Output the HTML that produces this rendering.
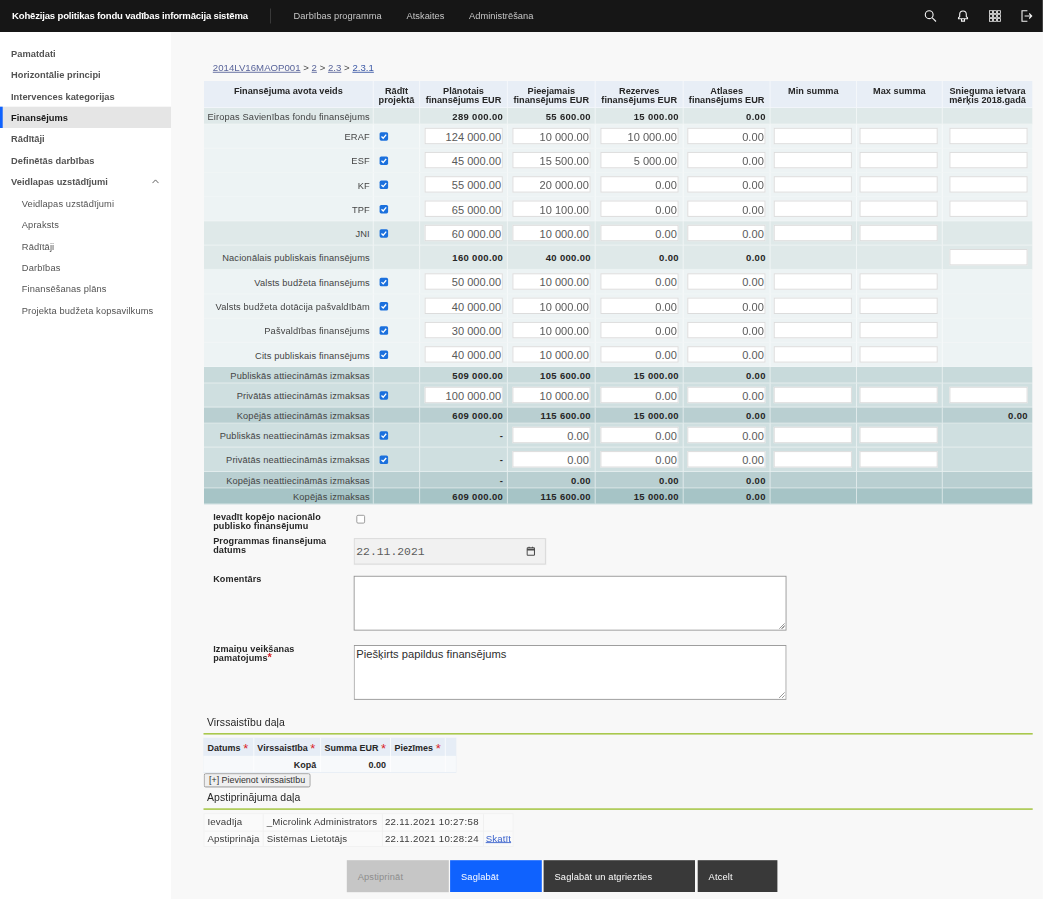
<!DOCTYPE html>
<html lang="lv">
<head>
<meta charset="utf-8">
<title>Kohēzijas politikas fondu vadības informācija sistēma</title>
<style>
*{box-sizing:border-box;margin:0;padding:0}
html{font-size:10px}
html,body{width:1044px;height:899px;overflow:hidden;background:#fff}
#root{position:absolute;left:0;top:0;width:1044rem;height:899rem;transform:scale(.1);transform-origin:0 0}
body{font-family:"Liberation Sans",sans-serif;color:#161616;position:relative;font-size:9.33rem}
.abs{position:absolute}
#main{position:absolute;left:171rem;top:32rem;width:871.8rem;height:867rem;background:#f8f8f8}
#hdr{position:absolute;left:0;top:0;width:1042.8rem;height:32rem;background:#161616;color:#fff}
#hdr .ttl{position:absolute;left:12rem;top:0;line-height:32rem;font-weight:bold;font-size:9.6rem;letter-spacing:-.2rem;white-space:nowrap;color:#fff}
#hdr .div{position:absolute;left:270rem;top:8.5rem;width:1rem;height:15rem;background:#393939}
#hdr .mi{position:absolute;top:0;line-height:31.5rem;font-size:9.33rem;color:#c6c6c6;white-space:nowrap}
#hdr svg{position:absolute;top:9.5rem}
#side{position:absolute;left:0;top:32rem;width:171rem;height:867rem;background:#fff}
#side .it{position:absolute;left:0;width:171rem;height:21.33rem;line-height:22.2rem;padding-left:11rem;font-weight:bold;font-size:9.33rem;color:#525252;white-space:nowrap}
#side .it.sub{padding-left:21.8rem;font-weight:normal;color:#525252;line-height:23.5rem;letter-spacing:.1rem}
#side .it.act{background:#e5e5e5;color:#161616;border-left:2.7rem solid #0f62fe;padding-left:8.3rem}
.bc{position:absolute;left:212.8rem;top:62rem;font-size:9.65rem;line-height:12rem;white-space:nowrap;color:#4a4a4a}
.bc a{color:#59649a;text-decoration:underline}
.bc a.last{color:#3a58a6}
/* table */
.tbl{position:absolute;height:424rem}
.r{position:absolute;left:0;width:100%}
.r.hd{background:#e8eef6}
.c{position:absolute;top:0;height:100%;border-right:1rem solid rgba(255,255,255,.55);border-bottom:1rem solid rgba(255,255,255,.4);white-space:nowrap}
.r.lt .c{border-bottom-color:rgba(255,255,255,.12)}
.r .c:last-child{border-right:0}
.c.h{text-align:center;font-weight:bold;font-size:9.2rem;line-height:9.2rem;color:#262626;padding-top:5.3rem}
.c.lab{text-align:right;padding-right:3rem;padding-top:1.9rem;font-size:9.33rem;letter-spacing:.1rem;color:#444;display:flex;align-items:center;justify-content:flex-end}
.c.chk{display:flex;align-items:center}
.c.v{display:flex;align-items:center;justify-content:flex-end;padding-right:4.1rem}
.c.v:last-child{padding-right:4.7rem}
.bv{font-weight:bold;font-size:9.5rem;letter-spacing:.33rem;margin-right:-.33rem;color:#262626;position:relative;top:.6rem}
.inp{display:block;width:78.2rem;height:16.4rem;background:#fff;border:1rem solid #dcdcdc;font-weight:normal;font-size:11.1rem;line-height:16.4rem;text-align:right;padding-right:.7rem;color:#5a5a5a}
.cb{display:block;width:8.5rem;height:8.5rem;background:#1b70dd;border-radius:1.6rem;margin-left:5.8rem;position:relative;top:.5rem}
.cb svg{display:block;width:100%;height:100%}
.lbl{position:absolute;left:213.2rem;font-weight:bold;font-size:9.1rem;letter-spacing:.08rem;line-height:9rem;color:#262626;white-space:nowrap}
.ta{position:absolute;left:353.7rem;width:432.8rem;height:54.8rem;background:#fff;border:.9rem solid #949494;font-size:11.2rem;line-height:12rem;padding:2rem 1.7rem;color:#2e2e2e}
.ta:after{content:"";position:absolute;right:1rem;bottom:1rem;width:6rem;height:6rem;background:linear-gradient(135deg,transparent 0 48%,#999 48% 58%,transparent 58% 72%,#999 72% 82%,transparent 82%)}
.sec{position:absolute;left:207rem;font-size:10.5rem;letter-spacing:.06rem;color:#262626;white-space:nowrap;line-height:12rem}
.gl{position:absolute;left:203.5rem;width:829.2rem;height:1.6rem;background:#a9c84c}
.st{position:absolute;font-size:9.7rem;letter-spacing:.1rem;color:#3a3a3a;white-space:nowrap}
.st.n{letter-spacing:.3rem}
.st.b{font-weight:bold;font-size:9rem;letter-spacing:0;color:#262626}
.rq{color:#da1e28;font-size:13rem;line-height:0;font-weight:normal;margin-left:2.6rem;position:relative;top:2.4rem}
.vl{top:0;width:1rem;height:100%;background:rgba(255,255,255,.7)}
.btn{position:absolute;top:860.2rem;height:31.8rem;line-height:33rem;padding-left:10.9rem;font-size:9.33rem;letter-spacing:.12rem;color:#fff;white-space:nowrap}
</style>
</head>
<body>
<div id="root">
<div id="main"></div>
<div id="hdr">
  <div class="ttl">Kohēzijas politikas fondu vadības informācija sistēma</div>
  <div class="div"></div>
  <div class="mi" style="left:293.6rem">Darbības programma</div>
  <div class="mi" style="left:406.5rem">Atskaites</div>
  <div class="mi" style="left:469.1rem">Administrēšana</div>
  <!-- search -->
  <svg style="width:13rem;height:13rem;left:924rem" viewBox="0 0 13 13" fill="none" stroke="#f4f4f4" stroke-width="1.1"><circle cx="5.2" cy="5.2" r="3.9"/><path d="M8.1 8.1 L12 12"/></svg>
  <!-- bell -->
  <svg style="width:13rem;height:13rem;left:956.5rem" viewBox="0 0 13 13" fill="none" stroke="#f4f4f4" stroke-width="1.1"><path d="M2 9.3 V8.3 L3.2 7 V4.8 A3.3 3.3 0 0 1 9.8 4.8 V7 L11 8.3 V9.3 Z"/><path d="M5 9.5 V11.6 H8 V9.5"/></svg>
  <!-- grid -->
  <svg style="width:13rem;height:13rem;left:988.5rem" viewBox="0 0 13 13" fill="none" stroke="#f4f4f4" stroke-width="1"><g stroke-width=".8"><rect x="1" y="1.2" width="3.1" height="2.7"/><rect x="4.95" y="1.2" width="3.1" height="2.7"/><rect x="8.9" y="1.2" width="3.1" height="2.7"/><rect x="1" y="5.15" width="3.1" height="2.7"/><rect x="4.95" y="5.15" width="3.1" height="2.7"/><rect x="8.9" y="5.15" width="3.1" height="2.7"/><rect x="1" y="9.1" width="3.1" height="2.7"/><rect x="4.95" y="9.1" width="3.1" height="2.7"/><rect x="8.9" y="9.1" width="3.1" height="2.7"/></g></svg>
  <!-- logout -->
  <svg style="width:13rem;height:13rem;left:1020rem" viewBox="0 0 13 13" fill="none" stroke="#f4f4f4" stroke-width="1.1"><path d="M7.4 1.2 H2 V11.8 H7.4"/><path d="M4.6 6.5 H11.5 M9.2 4 L11.7 6.5 L9.2 9"/></svg>
</div>
<div id="side">
  <div class="it" style="top:10.67rem">Pamatdati</div>
  <div class="it" style="top:32rem">Horizontālie principi</div>
  <div class="it" style="top:53.33rem">Intervences kategorijas</div>
  <div class="it act" style="top:74.67rem">Finansējums</div>
  <div class="it" style="top:96rem">Rādītāji</div>
  <div class="it" style="top:117.33rem">Definētās darbības</div>
  <div class="it" style="top:138.67rem">Veidlapas uzstādījumi
    <svg style="width:7rem;height:5rem;position:absolute;left:152rem;top:8.2rem" viewBox="0 0 7 5" fill="none" stroke="#525252" stroke-width="0.9"><path d="M0.5 4.2 L3.5 1 L6.5 4.2"/></svg>
  </div>
  <div class="it sub" style="top:160rem">Veidlapas uzstādījumi</div>
  <div class="it sub" style="top:181.33rem">Apraksts</div>
  <div class="it sub" style="top:202.67rem">Rādītāji</div>
  <div class="it sub" style="top:224rem">Darbības</div>
  <div class="it sub" style="top:245.33rem">Finansēšanas plāns</div>
  <div class="it sub" style="top:266.67rem">Projekta budžeta kopsavilkums</div>
</div>

<div class="bc"><a>2014LV16MAOP001</a> &gt; <a>2</a> &gt; <a>2.3</a> &gt; <a class="last">2.3.1</a></div>

<div class="tbl" style="left:204.0rem;top:81.0rem;width:828.3rem">
<div class="r hd" style="top:0;height:27.0rem">
<div class="c h" style="left:0.0rem;width:169.8rem;"><span>Finansējuma avota veids</span></div>
<div class="c h" style="left:169.8rem;width:46.3rem;"><span>Rādīt<br>projektā</span></div>
<div class="c h" style="left:216.1rem;width:87.8rem;"><span>Plānotais<br>finansējums EUR</span></div>
<div class="c h" style="left:303.9rem;width:87.8rem;"><span>Pieejamais<br>finansējums EUR</span></div>
<div class="c h" style="left:391.7rem;width:88.0rem;"><span>Rezerves<br>finansējums EUR</span></div>
<div class="c h" style="left:479.7rem;width:86.9rem;"><span>Atlases<br>finansējums EUR</span></div>
<div class="c h" style="left:566.6rem;width:86.4rem;"><span>Min summa</span></div>
<div class="c h" style="left:653.0rem;width:85.8rem;"><span>Max summa</span></div>
<div class="c h" style="left:738.8rem;width:89.5rem;"><span>Snieguma ietvara<br>mērķis 2018.gadā</span></div>
</div>
<div class="r sum" style="top:27.00rem;height:16.5rem;background:#dfe9e9">
<div class="c lab" style="left:0.0rem;width:169.8rem;"><span>Eiropas Savienības fondu finansējums</span></div>
<div class="c chk" style="left:169.8rem;width:46.3rem;"></div>
<div class="c v" style="left:216.1rem;width:87.8rem;"><span class="bv">289 000.00</span></div>
<div class="c v" style="left:303.9rem;width:87.8rem;"><span class="bv">55 600.00</span></div>
<div class="c v" style="left:391.7rem;width:88.0rem;"><span class="bv">15 000.00</span></div>
<div class="c v" style="left:479.7rem;width:86.9rem;"><span class="bv">0.00</span></div>
<div class="c v" style="left:566.6rem;width:86.4rem;"></div>
<div class="c v" style="left:653.0rem;width:85.8rem;"></div>
<div class="c v" style="left:738.8rem;width:89.5rem;"></div>
</div>
<div class="r in lt" style="top:43.50rem;height:23.98rem;background:#edf3f4">
<div class="c lab" style="left:0.0rem;width:169.8rem;"><span>ERAF</span></div>
<div class="c chk" style="left:169.8rem;width:46.3rem;"><i class="cb"><svg viewBox="0 0 9 9"><path d="M2 4.6 L3.8 6.4 L7 2.6" fill="none" stroke="#fff" stroke-width="1.4"/></svg></i></div>
<div class="c v" style="left:216.1rem;width:87.8rem;"><b class="inp">124 000.00</b></div>
<div class="c v" style="left:303.9rem;width:87.8rem;"><b class="inp">10 000.00</b></div>
<div class="c v" style="left:391.7rem;width:88.0rem;"><b class="inp">10 000.00</b></div>
<div class="c v" style="left:479.7rem;width:86.9rem;"><b class="inp">0.00</b></div>
<div class="c v" style="left:566.6rem;width:86.4rem;"><b class="inp"></b></div>
<div class="c v" style="left:653.0rem;width:85.8rem;"><b class="inp"></b></div>
<div class="c v" style="left:738.8rem;width:89.5rem;"><b class="inp"></b></div>
</div>
<div class="r in lt" style="top:67.48rem;height:24.28rem;background:#edf3f4">
<div class="c lab" style="left:0.0rem;width:169.8rem;"><span>ESF</span></div>
<div class="c chk" style="left:169.8rem;width:46.3rem;"><i class="cb"><svg viewBox="0 0 9 9"><path d="M2 4.6 L3.8 6.4 L7 2.6" fill="none" stroke="#fff" stroke-width="1.4"/></svg></i></div>
<div class="c v" style="left:216.1rem;width:87.8rem;"><b class="inp">45 000.00</b></div>
<div class="c v" style="left:303.9rem;width:87.8rem;"><b class="inp">15 500.00</b></div>
<div class="c v" style="left:391.7rem;width:88.0rem;"><b class="inp">5 000.00</b></div>
<div class="c v" style="left:479.7rem;width:86.9rem;"><b class="inp">0.00</b></div>
<div class="c v" style="left:566.6rem;width:86.4rem;"><b class="inp"></b></div>
<div class="c v" style="left:653.0rem;width:85.8rem;"><b class="inp"></b></div>
<div class="c v" style="left:738.8rem;width:89.5rem;"><b class="inp"></b></div>
</div>
<div class="r in lt" style="top:91.76rem;height:24.28rem;background:#edf3f4">
<div class="c lab" style="left:0.0rem;width:169.8rem;"><span>KF</span></div>
<div class="c chk" style="left:169.8rem;width:46.3rem;"><i class="cb"><svg viewBox="0 0 9 9"><path d="M2 4.6 L3.8 6.4 L7 2.6" fill="none" stroke="#fff" stroke-width="1.4"/></svg></i></div>
<div class="c v" style="left:216.1rem;width:87.8rem;"><b class="inp">55 000.00</b></div>
<div class="c v" style="left:303.9rem;width:87.8rem;"><b class="inp">20 000.00</b></div>
<div class="c v" style="left:391.7rem;width:88.0rem;"><b class="inp">0.00</b></div>
<div class="c v" style="left:479.7rem;width:86.9rem;"><b class="inp">0.00</b></div>
<div class="c v" style="left:566.6rem;width:86.4rem;"><b class="inp"></b></div>
<div class="c v" style="left:653.0rem;width:85.8rem;"><b class="inp"></b></div>
<div class="c v" style="left:738.8rem;width:89.5rem;"><b class="inp"></b></div>
</div>
<div class="r in lt" style="top:116.04rem;height:24.28rem;background:#edf3f4">
<div class="c lab" style="left:0.0rem;width:169.8rem;"><span>TPF</span></div>
<div class="c chk" style="left:169.8rem;width:46.3rem;"><i class="cb"><svg viewBox="0 0 9 9"><path d="M2 4.6 L3.8 6.4 L7 2.6" fill="none" stroke="#fff" stroke-width="1.4"/></svg></i></div>
<div class="c v" style="left:216.1rem;width:87.8rem;"><b class="inp">65 000.00</b></div>
<div class="c v" style="left:303.9rem;width:87.8rem;"><b class="inp">10 100.00</b></div>
<div class="c v" style="left:391.7rem;width:88.0rem;"><b class="inp">0.00</b></div>
<div class="c v" style="left:479.7rem;width:86.9rem;"><b class="inp">0.00</b></div>
<div class="c v" style="left:566.6rem;width:86.4rem;"><b class="inp"></b></div>
<div class="c v" style="left:653.0rem;width:85.8rem;"><b class="inp"></b></div>
<div class="c v" style="left:738.8rem;width:89.5rem;"><b class="inp"></b></div>
</div>
<div class="r in" style="top:140.32rem;height:24.28rem;background:#dfe9e9">
<div class="c lab" style="left:0.0rem;width:169.8rem;"><span>JNI</span></div>
<div class="c chk" style="left:169.8rem;width:46.3rem;"><i class="cb"><svg viewBox="0 0 9 9"><path d="M2 4.6 L3.8 6.4 L7 2.6" fill="none" stroke="#fff" stroke-width="1.4"/></svg></i></div>
<div class="c v" style="left:216.1rem;width:87.8rem;"><b class="inp">60 000.00</b></div>
<div class="c v" style="left:303.9rem;width:87.8rem;"><b class="inp">10 000.00</b></div>
<div class="c v" style="left:391.7rem;width:88.0rem;"><b class="inp">0.00</b></div>
<div class="c v" style="left:479.7rem;width:86.9rem;"><b class="inp">0.00</b></div>
<div class="c v" style="left:566.6rem;width:86.4rem;"><b class="inp"></b></div>
<div class="c v" style="left:653.0rem;width:85.8rem;"><b class="inp"></b></div>
<div class="c v" style="left:738.8rem;width:89.5rem;"></div>
</div>
<div class="r sum" style="top:164.60rem;height:24.28rem;background:#dfe9e9">
<div class="c lab" style="left:0.0rem;width:169.8rem;"><span>Nacionālais publiskais finansējums</span></div>
<div class="c chk" style="left:169.8rem;width:46.3rem;"></div>
<div class="c v" style="left:216.1rem;width:87.8rem;"><span class="bv">160 000.00</span></div>
<div class="c v" style="left:303.9rem;width:87.8rem;"><span class="bv">40 000.00</span></div>
<div class="c v" style="left:391.7rem;width:88.0rem;"><span class="bv">0.00</span></div>
<div class="c v" style="left:479.7rem;width:86.9rem;"><span class="bv">0.00</span></div>
<div class="c v" style="left:566.6rem;width:86.4rem;"></div>
<div class="c v" style="left:653.0rem;width:85.8rem;"></div>
<div class="c v" style="left:738.8rem;width:89.5rem;"><b class="inp"></b></div>
</div>
<div class="r in lt" style="top:188.88rem;height:24.28rem;background:#edf3f4">
<div class="c lab" style="left:0.0rem;width:169.8rem;"><span>Valsts budžeta finansējums</span></div>
<div class="c chk" style="left:169.8rem;width:46.3rem;"><i class="cb"><svg viewBox="0 0 9 9"><path d="M2 4.6 L3.8 6.4 L7 2.6" fill="none" stroke="#fff" stroke-width="1.4"/></svg></i></div>
<div class="c v" style="left:216.1rem;width:87.8rem;"><b class="inp">50 000.00</b></div>
<div class="c v" style="left:303.9rem;width:87.8rem;"><b class="inp">10 000.00</b></div>
<div class="c v" style="left:391.7rem;width:88.0rem;"><b class="inp">0.00</b></div>
<div class="c v" style="left:479.7rem;width:86.9rem;"><b class="inp">0.00</b></div>
<div class="c v" style="left:566.6rem;width:86.4rem;"><b class="inp"></b></div>
<div class="c v" style="left:653.0rem;width:85.8rem;"><b class="inp"></b></div>
<div class="c v" style="left:738.8rem;width:89.5rem;"></div>
</div>
<div class="r in lt" style="top:213.16rem;height:24.28rem;background:#edf3f4">
<div class="c lab" style="left:0.0rem;width:169.8rem;"><span>Valsts budžeta dotācija pašvaldībām</span></div>
<div class="c chk" style="left:169.8rem;width:46.3rem;"><i class="cb"><svg viewBox="0 0 9 9"><path d="M2 4.6 L3.8 6.4 L7 2.6" fill="none" stroke="#fff" stroke-width="1.4"/></svg></i></div>
<div class="c v" style="left:216.1rem;width:87.8rem;"><b class="inp">40 000.00</b></div>
<div class="c v" style="left:303.9rem;width:87.8rem;"><b class="inp">10 000.00</b></div>
<div class="c v" style="left:391.7rem;width:88.0rem;"><b class="inp">0.00</b></div>
<div class="c v" style="left:479.7rem;width:86.9rem;"><b class="inp">0.00</b></div>
<div class="c v" style="left:566.6rem;width:86.4rem;"><b class="inp"></b></div>
<div class="c v" style="left:653.0rem;width:85.8rem;"><b class="inp"></b></div>
<div class="c v" style="left:738.8rem;width:89.5rem;"></div>
</div>
<div class="r in lt" style="top:237.44rem;height:24.28rem;background:#edf3f4">
<div class="c lab" style="left:0.0rem;width:169.8rem;"><span>Pašvaldības finansējums</span></div>
<div class="c chk" style="left:169.8rem;width:46.3rem;"><i class="cb"><svg viewBox="0 0 9 9"><path d="M2 4.6 L3.8 6.4 L7 2.6" fill="none" stroke="#fff" stroke-width="1.4"/></svg></i></div>
<div class="c v" style="left:216.1rem;width:87.8rem;"><b class="inp">30 000.00</b></div>
<div class="c v" style="left:303.9rem;width:87.8rem;"><b class="inp">10 000.00</b></div>
<div class="c v" style="left:391.7rem;width:88.0rem;"><b class="inp">0.00</b></div>
<div class="c v" style="left:479.7rem;width:86.9rem;"><b class="inp">0.00</b></div>
<div class="c v" style="left:566.6rem;width:86.4rem;"><b class="inp"></b></div>
<div class="c v" style="left:653.0rem;width:85.8rem;"><b class="inp"></b></div>
<div class="c v" style="left:738.8rem;width:89.5rem;"></div>
</div>
<div class="r in lt" style="top:261.72rem;height:24.28rem;background:#edf3f4">
<div class="c lab" style="left:0.0rem;width:169.8rem;"><span>Cits publiskais finansējums</span></div>
<div class="c chk" style="left:169.8rem;width:46.3rem;"><i class="cb"><svg viewBox="0 0 9 9"><path d="M2 4.6 L3.8 6.4 L7 2.6" fill="none" stroke="#fff" stroke-width="1.4"/></svg></i></div>
<div class="c v" style="left:216.1rem;width:87.8rem;"><b class="inp">40 000.00</b></div>
<div class="c v" style="left:303.9rem;width:87.8rem;"><b class="inp">10 000.00</b></div>
<div class="c v" style="left:391.7rem;width:88.0rem;"><b class="inp">0.00</b></div>
<div class="c v" style="left:479.7rem;width:86.9rem;"><b class="inp">0.00</b></div>
<div class="c v" style="left:566.6rem;width:86.4rem;"><b class="inp"></b></div>
<div class="c v" style="left:653.0rem;width:85.8rem;"><b class="inp"></b></div>
<div class="c v" style="left:738.8rem;width:89.5rem;"></div>
</div>
<div class="r sum" style="top:286.00rem;height:16.4rem;background:#c8dadb">
<div class="c lab" style="left:0.0rem;width:169.8rem;"><span>Publiskās attiecināmās izmaksas</span></div>
<div class="c chk" style="left:169.8rem;width:46.3rem;"></div>
<div class="c v" style="left:216.1rem;width:87.8rem;"><span class="bv">509 000.00</span></div>
<div class="c v" style="left:303.9rem;width:87.8rem;"><span class="bv">105 600.00</span></div>
<div class="c v" style="left:391.7rem;width:88.0rem;"><span class="bv">15 000.00</span></div>
<div class="c v" style="left:479.7rem;width:86.9rem;"><span class="bv">0.00</span></div>
<div class="c v" style="left:566.6rem;width:86.4rem;"></div>
<div class="c v" style="left:653.0rem;width:85.8rem;"></div>
<div class="c v" style="left:738.8rem;width:89.5rem;"></div>
</div>
<div class="r in" style="top:302.40rem;height:24.1rem;background:#cfdfe0">
<div class="c lab" style="left:0.0rem;width:169.8rem;"><span>Privātās attiecināmās izmaksas</span></div>
<div class="c chk" style="left:169.8rem;width:46.3rem;"><i class="cb"><svg viewBox="0 0 9 9"><path d="M2 4.6 L3.8 6.4 L7 2.6" fill="none" stroke="#fff" stroke-width="1.4"/></svg></i></div>
<div class="c v" style="left:216.1rem;width:87.8rem;"><b class="inp">100 000.00</b></div>
<div class="c v" style="left:303.9rem;width:87.8rem;"><b class="inp">10 000.00</b></div>
<div class="c v" style="left:391.7rem;width:88.0rem;"><b class="inp">0.00</b></div>
<div class="c v" style="left:479.7rem;width:86.9rem;"><b class="inp">0.00</b></div>
<div class="c v" style="left:566.6rem;width:86.4rem;"><b class="inp"></b></div>
<div class="c v" style="left:653.0rem;width:85.8rem;"><b class="inp"></b></div>
<div class="c v" style="left:738.8rem;width:89.5rem;"><b class="inp"></b></div>
</div>
<div class="r sum" style="top:326.50rem;height:16.0rem;background:#b9cfd1">
<div class="c lab" style="left:0.0rem;width:169.8rem;"><span>Kopējās attiecināmās izmaksas</span></div>
<div class="c chk" style="left:169.8rem;width:46.3rem;"></div>
<div class="c v" style="left:216.1rem;width:87.8rem;"><span class="bv">609 000.00</span></div>
<div class="c v" style="left:303.9rem;width:87.8rem;"><span class="bv">115 600.00</span></div>
<div class="c v" style="left:391.7rem;width:88.0rem;"><span class="bv">15 000.00</span></div>
<div class="c v" style="left:479.7rem;width:86.9rem;"><span class="bv">0.00</span></div>
<div class="c v" style="left:566.6rem;width:86.4rem;"></div>
<div class="c v" style="left:653.0rem;width:85.8rem;"></div>
<div class="c v" style="left:738.8rem;width:89.5rem;"><span class="bv">0.00</span></div>
</div>
<div class="r in" style="top:342.50rem;height:24.0rem;background:#cfdfe0">
<div class="c lab" style="left:0.0rem;width:169.8rem;"><span>Publiskās neattiecināmās izmaksas</span></div>
<div class="c chk" style="left:169.8rem;width:46.3rem;"><i class="cb"><svg viewBox="0 0 9 9"><path d="M2 4.6 L3.8 6.4 L7 2.6" fill="none" stroke="#fff" stroke-width="1.4"/></svg></i></div>
<div class="c v" style="left:216.1rem;width:87.8rem;"><span class="bv">-</span></div>
<div class="c v" style="left:303.9rem;width:87.8rem;"><b class="inp">0.00</b></div>
<div class="c v" style="left:391.7rem;width:88.0rem;"><b class="inp">0.00</b></div>
<div class="c v" style="left:479.7rem;width:86.9rem;"><b class="inp">0.00</b></div>
<div class="c v" style="left:566.6rem;width:86.4rem;"><b class="inp"></b></div>
<div class="c v" style="left:653.0rem;width:85.8rem;"><b class="inp"></b></div>
<div class="c v" style="left:738.8rem;width:89.5rem;"></div>
</div>
<div class="r in" style="top:366.50rem;height:24.5rem;background:#cfdfe0">
<div class="c lab" style="left:0.0rem;width:169.8rem;"><span>Privātās neattiecināmās izmaksas</span></div>
<div class="c chk" style="left:169.8rem;width:46.3rem;"><i class="cb"><svg viewBox="0 0 9 9"><path d="M2 4.6 L3.8 6.4 L7 2.6" fill="none" stroke="#fff" stroke-width="1.4"/></svg></i></div>
<div class="c v" style="left:216.1rem;width:87.8rem;"><span class="bv">-</span></div>
<div class="c v" style="left:303.9rem;width:87.8rem;"><b class="inp">0.00</b></div>
<div class="c v" style="left:391.7rem;width:88.0rem;"><b class="inp">0.00</b></div>
<div class="c v" style="left:479.7rem;width:86.9rem;"><b class="inp">0.00</b></div>
<div class="c v" style="left:566.6rem;width:86.4rem;"><b class="inp"></b></div>
<div class="c v" style="left:653.0rem;width:85.8rem;"><b class="inp"></b></div>
<div class="c v" style="left:738.8rem;width:89.5rem;"></div>
</div>
<div class="r sum" style="top:391.00rem;height:16.3rem;background:#b9cfd1">
<div class="c lab" style="left:0.0rem;width:169.8rem;"><span>Kopējās neattiecināmās izmaksas</span></div>
<div class="c chk" style="left:169.8rem;width:46.3rem;"></div>
<div class="c v" style="left:216.1rem;width:87.8rem;"><span class="bv">-</span></div>
<div class="c v" style="left:303.9rem;width:87.8rem;"><span class="bv">0.00</span></div>
<div class="c v" style="left:391.7rem;width:88.0rem;"><span class="bv">0.00</span></div>
<div class="c v" style="left:479.7rem;width:86.9rem;"><span class="bv">0.00</span></div>
<div class="c v" style="left:566.6rem;width:86.4rem;"></div>
<div class="c v" style="left:653.0rem;width:85.8rem;"></div>
<div class="c v" style="left:738.8rem;width:89.5rem;"></div>
</div>
<div class="r sum" style="top:407.30rem;height:16.0rem;background:#a6c4c6">
<div class="c lab" style="left:0.0rem;width:169.8rem;"><span>Kopējās izmaksas</span></div>
<div class="c chk" style="left:169.8rem;width:46.3rem;"></div>
<div class="c v" style="left:216.1rem;width:87.8rem;"><span class="bv">609 000.00</span></div>
<div class="c v" style="left:303.9rem;width:87.8rem;"><span class="bv">115 600.00</span></div>
<div class="c v" style="left:391.7rem;width:88.0rem;"><span class="bv">15 000.00</span></div>
<div class="c v" style="left:479.7rem;width:86.9rem;"><span class="bv">0.00</span></div>
<div class="c v" style="left:566.6rem;width:86.4rem;"></div>
<div class="c v" style="left:653.0rem;width:85.8rem;"></div>
<div class="c v" style="left:738.8rem;width:89.5rem;"></div>
</div>
</div>

<div class="lbl" style="top:512.2rem">Ievadīt kopējo nacionālo<br>publisko finansējumu</div>
<div class="abs" style="left:356.4rem;top:514.9rem;width:8.6rem;height:8.6rem;border:.8rem solid #858585;border-radius:1.6rem;background:#fff"></div>
<div class="lbl" style="top:536.5rem">Programmas finansējuma<br>datums</div>
<div class="abs" style="left:353.7rem;top:538.1rem;width:192.2rem;height:26.5rem;background:#f1f1f1;border:1rem solid #dadada;font-family:'Liberation Mono',monospace;font-size:11.4rem;line-height:25rem;padding-left:1.5rem;color:#5c5c5c;white-space:nowrap">22.11.2021
  <svg style="width:9rem;height:10rem;position:absolute;left:171.6rem;top:7rem" viewBox="0 0 9 10" fill="none" stroke="#4a4a4a" stroke-width="1.1"><rect x="0.8" y="1.8" width="7.4" height="7.4" rx="0.8"/><path d="M0.8 3.6 H8.2" stroke-width="1.6"/><path d="M2.8 0.6 V2 M6.2 0.6 V2"/></svg>
</div>
<div class="lbl" style="top:574.2rem">Komentārs</div>
<div class="ta" style="top:575.8rem"></div>
<div class="lbl" style="top:643.9rem">Izmaiņu veikšanas<br>pamatojums<span style="color:#da1e28;font-size:11rem;line-height:0">*</span></div>
<div class="ta" style="top:645rem">Piešķirts papildus finansējums</div>

<div class="sec" style="top:716.3rem">Virssaistību daļa</div>
<div class="gl" style="top:733rem"></div>
<div class="abs" style="left:203.3rem;top:737.8rem;width:252.6rem;height:34.2rem">
  <div class="abs" style="left:0;top:0;width:100%;height:18.1rem;background:#e6edf6"></div>
  <div class="abs" style="left:0;top:18.1rem;width:100%;height:16.1rem;background:#f7f9fb"></div>
  <div class="abs vl" style="left:50rem"></div><div class="abs vl" style="left:116.8rem"></div><div class="abs vl" style="left:186.7rem"></div><div class="abs vl" style="left:241.5rem"></div>
  <div class="st b" style="left:4.3rem;top:4.9rem">Datums<span class="rq">*</span></div>
  <div class="st b" style="left:54rem;top:4.9rem">Virssaistība<span class="rq">*</span></div>
  <div class="st b" style="left:121.2rem;top:4.9rem">Summa EUR<span class="rq">*</span></div>
  <div class="st b" style="left:191.3rem;top:4.9rem">Piezīmes<span class="rq">*</span></div>
  <div class="st b" style="right:139.7rem;top:21.9rem">Kopā</div>
  <div class="st b" style="right:69.8rem;top:21.9rem">0.00</div>
</div>
<div class="abs" style="left:203.7rem;top:773.2rem;width:106.9rem;height:14.2rem;background:#efefef;border:.9rem solid #8f8f8f;border-radius:2rem;font-size:8.9rem;line-height:12.4rem;padding-left:4.4rem;color:#333;white-space:nowrap">[+] Pievienot virssaistību</div>
<div class="sec" style="top:791.3rem">Apstiprinājuma daļa</div>
<div class="gl" style="top:808.3rem"></div>
<div class="abs" style="left:203.5rem;top:813.2rem;width:310.1rem;height:33.8rem;background:#fafafa;border:1rem solid #f2f2f2">
  <div class="abs" style="left:0;top:16.4rem;width:100%;height:1rem;background:#f2f2f2"></div>
  <div class="abs" style="left:58.2rem;top:0;width:1rem;height:100%;background:#f0f0f0"></div>
  <div class="abs" style="left:177.4rem;top:0;width:1rem;height:100%;background:#f0f0f0"></div>
  <div class="abs" style="left:278.5rem;top:0;width:1rem;height:100%;background:#f0f0f0"></div>
  <div class="st" style="left:3rem;top:2.2rem">Ievadīja</div>
  <div class="st" style="left:62.3rem;top:2.2rem">_Microlink Administrators</div>
  <div class="st n" style="left:180.4rem;top:2.2rem">22.11.2021 10:27:58</div>
  <div class="st" style="left:3rem;top:18.6rem">Apstiprināja</div>
  <div class="st" style="left:62.3rem;top:18.6rem">Sistēmas Lietotājs</div>
  <div class="st n" style="left:180.4rem;top:18.6rem">22.11.2021 10:28:24</div>
  <div class="st" style="left:281.2rem;top:18.6rem;color:#3a62cc;text-decoration:underline">Skatīt</div>
</div>

<div class="btn" style="left:346.8rem;width:101.1rem;background:#c6c6c6;color:#8d8d8d">Apstiprināt</div>
<div class="btn" style="left:450.1rem;width:91.7rem;background:#0f62fe">Saglabāt</div>
<div class="btn" style="left:543.6rem;width:151.4rem;background:#393939">Saglabāt un atgriezties</div>
<div class="btn" style="left:697.7rem;width:79.7rem;background:#393939">Atcelt</div>
</div>
</body>
</html>
